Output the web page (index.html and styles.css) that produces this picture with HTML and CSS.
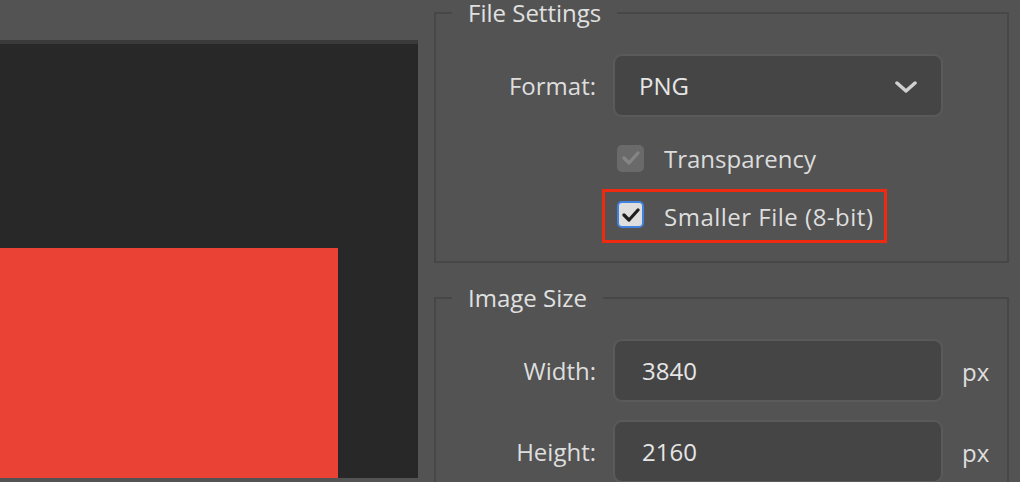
FILE: index.html
```html
<!DOCTYPE html>
<html lang="en">
<head>
    <meta charset="UTF-8">
    <meta name="viewport" content="width=device-width, initial-scale=1.0">
    <title>Export As</title>
    <link rel="stylesheet" href="styles.css">
</head>
<body>
    <div class="window">
        <!-- Preview canvas -->
        <div class="preview">
            <div class="canvas">
                <div class="artboard"></div>
            </div>
        </div>

        <!-- Settings panel -->
        <div class="panel">
            <fieldset class="group group-file">
                <legend>File Settings</legend>
                <div class="field-row">
                    <label class="field-label" for="format">Format:</label>
                    <div class="select" id="format">
                        <span>PNG</span>
                        <svg class="chevron" width="22" height="12" viewBox="0 0 22 12">
                            <path d="M2 2 L11 10 L20 2" fill="none" stroke="#d0d0d0" stroke-width="3.5" stroke-linecap="round" stroke-linejoin="round"/>
                        </svg>
                    </div>
                </div>
                <div class="checks">
                    <div class="check-row disabled">
                        <span class="box">
                            <svg width="18" height="14" viewBox="0 0 18 14">
                                <path d="M2 7 L7 12 L16 2" fill="none" stroke="#858585" stroke-width="3.2" stroke-linecap="round" stroke-linejoin="round"/>
                            </svg>
                        </span>
                        <span class="check-text">Transparency</span>
                    </div>
                    <div class="check-row highlight">
                        <span class="box checked">
                            <svg width="18" height="14" viewBox="0 0 18 14">
                                <path d="M2 7 L7 12 L16 2" fill="none" stroke="#1e1e1e" stroke-width="3.2" stroke-linecap="round" stroke-linejoin="round"/>
                            </svg>
                        </span>
                        <span class="check-text">Smaller File (8-bit)</span>
                    </div>
                </div>
            </fieldset>

            <fieldset class="group group-size">
                <legend>Image Size</legend>
                <div class="field-row">
                    <label class="field-label" for="width">Width:</label>
                    <div class="input" id="width">3840</div>
                    <span class="unit">px</span>
                </div>
                <div class="field-row second">
                    <label class="field-label" for="height">Height:</label>
                    <div class="input" id="height">2160</div>
                    <span class="unit">px</span>
                </div>
            </fieldset>
        </div>
    </div>
</body>
</html>
```

FILE: styles.css
```css
/* Base */
body {
    margin: 0;
    padding: 0;
    background-color: #535353;
    font-family: "Open Sans", "Noto Sans", sans-serif;
    font-size: 24px;
    color: #dedede;
    overflow: hidden;
}

.window {
    display: flex;
    height: 482px;
    overflow: hidden;
}

/* Preview canvas */
.preview {
    width: 418px;
    padding-top: 40px;
    flex-shrink: 0;
}

.canvas {
    height: 438px;
    background-color: #282828;
    border-top: 4px solid #3a3a3a;
    box-sizing: border-box;
    overflow: hidden;
}

.artboard {
    width: 338px;
    height: 300px;
    margin-top: 204px;
    background-color: #ea4335;
}

/* Settings panel */
.panel {
    margin-left: 16px;
    width: 575px;
    flex-shrink: 0;
}

.group {
    margin: 0;
    padding: 0;
    border: 2px solid #474747;
    box-sizing: border-box;
    min-width: 0;
}

.group legend {
    margin-left: 16px;
    padding: 0 16px;
    line-height: 26px;
    height: 26px;
    color: #e0e0e0;
}

.group-file {
    margin-top: 0;
    height: 263px;
}

.group-size {
    margin-top: 22px;
    height: 260px;
}

/* Label + control rows */
.field-row {
    display: flex;
    align-items: center;
    margin-top: 28px;
}

.field-row.second {
    margin-top: 18px;
}

.field-label {
    width: 160px;
    margin-right: 17px;
    text-align: right;
    flex-shrink: 0;
}

.select,
.input {
    width: 330px;
    height: 63px;
    box-sizing: border-box;
    background-color: #454545;
    border: 2px solid #5a5a5a;
    border-radius: 9px;
    display: flex;
    align-items: center;
    padding-left: 24px;
    color: #e6e6e6;
}

.input {
    padding-left: 27px;
}

.select span {
    flex: 1;
}

.chevron {
    margin-right: 24px;
    margin-top: 2px;
}

.unit {
    margin-left: 19px;
    margin-top: 2px;
}

/* Checkbox rows */
.checks {
    margin-left: 177px;
}

.check-row {
    display: flex;
    align-items: center;
    height: 30px;
    padding-left: 4px;
}

.check-row.disabled {
    margin-top: 26px;
}

.check-row.highlight {
    display: inline-flex;
    height: 54px;
    margin-top: 16px;
    margin-left: -11px;
    padding: 0 11px 0 12px;
    border: 3px solid #f02a10;
    box-sizing: border-box;
}

.highlight .check-text {
    letter-spacing: 0.5px;
}

.box {
    width: 27px;
    height: 27px;
    box-sizing: border-box;
    border-radius: 5px;
    background-color: #6a6a6a;
    display: flex;
    align-items: center;
    justify-content: center;
    margin-right: 20px;
    flex-shrink: 0;
}

.box.checked {
    background-color: #dedede;
    border: 2px solid #3f82e0;
    margin-top: -3px;
}

.disabled .check-text {
    color: #dcdcdc;
}
```
